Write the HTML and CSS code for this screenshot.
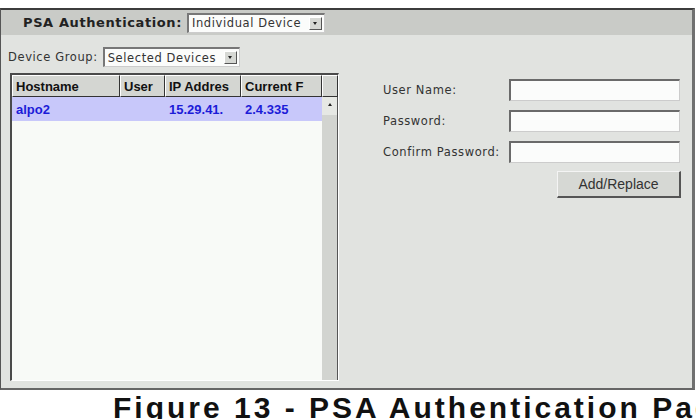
FILE: index.html
```html
<!DOCTYPE html>
<html lang="en">
<head>
    <meta charset="UTF-8">
    <title>PSA Authentication</title>
    <link rel="stylesheet" href="styles.css">
</head>
<body>
    <div class="panel">
        <div class="panel-head">
            <span class="head-label">PSA Authentication:</span>
            <span class="select select-mode">Individual Device <span class="select-btn"><i class="arrow-down"></i></span></span>
        </div>
        <div class="panel-body">
            <div class="left-col">
                <div class="group-row">
                    <span class="label">Device Group:</span>
                    <span class="select select-group">Selected Devices <span class="select-btn"><i class="arrow-down"></i></span></span>
                </div>
                <div class="device-table">
                    <div class="table-head">
                        <div class="th">Hostname</div>
                        <div class="th">User</div>
                        <div class="th">IP Addres</div>
                        <div class="th">Current F</div>
                        <div class="th"></div>
                    </div>
                    <div class="table-body">
                        <div class="rows">
                            <div class="row selected">
                                <div class="td">alpo2</div>
                                <div class="td"></div>
                                <div class="td">15.29.41.</div>
                                <div class="td">2.4.335</div>
                            </div>
                        </div>
                        <div class="scrollbar">
                            <div class="scroll-up"><i class="arrow-up"></i></div>
                        </div>
                    </div>
                </div>
            </div>
            <div class="right-col">
                <div class="form">
                    <span class="label">User Name:</span>
                    <span class="input"></span>
                    <span class="label">Password:</span>
                    <span class="input"></span>
                    <span class="label">Confirm Password:</span>
                    <span class="input"></span>
                </div>
                <div class="actions">
                    <span class="button">Add/Replace</span>
                </div>
            </div>
        </div>
    </div>
    <div class="caption-wrap">
        <div class="caption">Figure 13 - PSA Authentication Page</div>
    </div>
</body>
</html>
```

FILE: styles.css
```css
body {
    margin: 0;
    background: #ffffff;
    font-family: "DejaVu Sans", Verdana, sans-serif;
    color: #333;
    overflow: hidden;
    height: 419px;
}
.panel {
    margin-top: 8px;
    width: 691px;
    height: 378px;
    border-top: 2px solid #3c3c3c;
    border-left: 1px solid #555;
    border-right: 3px solid #707070;
    border-bottom: 2px solid #666;
    background: #e1e3e0;
    display: flex;
    flex-direction: column;
}
.panel-head {
    height: 25px;
    background: #c9cbc7;
    display: flex;
    align-items: center;
    padding-left: 22px;
    gap: 5px;
}
.head-label {
    font-weight: bold;
    font-size: 13px;
    letter-spacing: 0.6px;
    color: #222;
}
.select {
    display: inline-flex;
    align-items: center;
    gap: 4px;
    height: 17px;
    padding: 0 2px 0 3px;
    background: #fbfcfb;
    border-top: 2px solid #777;
    border-left: 2px solid #777;
    border-right: 1px solid #ccc;
    border-bottom: 1px solid #ccc;
    font-size: 11.5px;
    letter-spacing: 0.6px;
    color: #333;
}
.select-mode {
    width: 130px;
    justify-content: space-between;
}
.select-group {
    width: 129px;
    justify-content: space-between;
}
.select-btn {
    width: 11px;
    height: 11px;
    background: #d6d8d4;
    border-top: 1px solid #fff;
    border-left: 1px solid #fff;
    border-right: 1px solid #555;
    border-bottom: 1px solid #555;
    display: flex;
    align-items: center;
    justify-content: center;
}
.arrow-down {
    width: 0;
    height: 0;
    border-left: 2px solid transparent;
    border-right: 2px solid transparent;
    border-top: 3px solid #222;
}
.arrow-up {
    width: 0;
    height: 0;
    border-left: 2px solid transparent;
    border-right: 2px solid transparent;
    border-bottom: 3px solid #222;
}
.panel-body {
    flex: 1;
    display: flex;
}
.left-col {
    width: 345px;
    display: flex;
    flex-direction: column;
    padding: 12px 0 7px 7px;
}
.group-row {
    display: flex;
    align-items: center;
    gap: 5px;
}
.label {
    font-size: 11.5px;
    letter-spacing: 0.6px;
    color: #333;
}
.device-table {
    margin: 6px 0 0 2px;
    width: 326px;
    flex: 1;
    display: flex;
    flex-direction: column;
    border-top: 2px solid #4a4a4a;
    border-left: 2px solid #4a4a4a;
    border-right: 1px solid #fff;
    border-bottom: 1px solid #fff;
    font-family: "Liberation Sans", Arial, sans-serif;
    font-weight: bold;
    font-size: 13px;
}
.table-head {
    display: grid;
    grid-template-columns: 108px 45px 76px 81px 16px;
    height: 22px;
}
.th {
    background: #d4d6d2;
    border-top: 1px solid #fff;
    border-left: 1px solid #fff;
    border-right: 1px solid #333;
    border-bottom: 1px solid #333;
    padding: 3px 0 0 3px;
    color: #111;
    white-space: nowrap;
    overflow: hidden;
}
.table-body {
    flex: 1;
    display: flex;
}
.rows {
    flex: 1;
    background: #f8faf7;
}
.row {
    display: grid;
    grid-template-columns: 108px 45px 76px 81px;
    height: 24px;
    align-items: center;
}
.row.selected {
    background: #c8c8fa;
    color: #1c1cd8;
}
.td {
    padding-left: 4px;
}
.scrollbar {
    width: 15px;
    background: #d2d4d0;
    border-right: 1px solid #555;
}
.scroll-up {
    height: 18px;
    background: #e6e8e4;
    display: flex;
    justify-content: center;
    padding-top: 6px;
    box-sizing: border-box;
}
.right-col {
    flex: 1;
    padding: 44px 0 0 30px;
}
.form {
    display: grid;
    grid-template-columns: 126px 171px;
    row-gap: 9px;
    align-items: center;
}
.input {
    height: 19px;
    background: #fbfcfb;
    border-top: 2px solid #6a6a6a;
    border-left: 2px solid #6a6a6a;
    border-right: 1px solid #ccc;
    border-bottom: 1px solid #ccc;
}
.actions {
    display: flex;
    justify-content: flex-end;
    width: 298px;
    margin-top: 8px;
}
.button {
    width: 121px;
    height: 24px;
    background: #d6d8d4;
    border-top: 1px solid #f4f4f4;
    border-left: 1px solid #f4f4f4;
    border-right: 2px solid #555;
    border-bottom: 2px solid #555;
    font-family: "Liberation Sans", Arial, sans-serif;
    font-size: 14px;
    color: #333;
    display: flex;
    align-items: center;
    justify-content: center;
}
.caption-wrap {
    width: 696px;
    overflow: hidden;
}
.caption {
    margin: 1px 0 0 113px;
    font-family: "Liberation Sans", Arial, sans-serif;
    font-weight: bold;
    font-size: 30px;
    letter-spacing: 3px;
    color: #111;
    white-space: nowrap;
}
```
